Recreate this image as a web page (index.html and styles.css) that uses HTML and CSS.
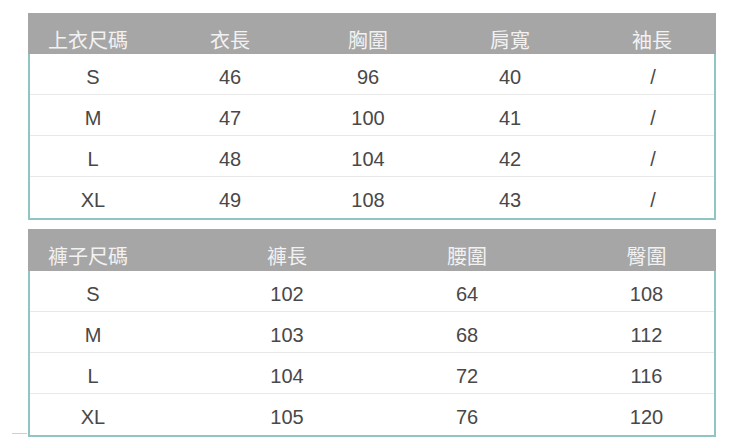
FILE: index.html
```html
<!DOCTYPE html>
<html lang="zh-Hant">
<head>
<meta charset="utf-8">
<title>尺碼表</title>
<link rel="stylesheet" href="styles.css">
</head>
<body>
<div class="page">
  <section class="size-table top">
    <div class="head row5">
      <div class="c first">上衣尺碼</div>
      <div class="c">衣長</div>
      <div class="c">胸圍</div>
      <div class="c">肩寬</div>
      <div class="c">袖長</div>
    </div>
    <div class="body">
      <div class="row row5"><div class="c">S</div><div class="c">46</div><div class="c">96</div><div class="c">40</div><div class="c slash">/</div></div>
      <div class="row row5"><div class="c">M</div><div class="c">47</div><div class="c">100</div><div class="c">41</div><div class="c slash">/</div></div>
      <div class="row row5"><div class="c">L</div><div class="c">48</div><div class="c">104</div><div class="c">42</div><div class="c slash">/</div></div>
      <div class="row row5"><div class="c">XL</div><div class="c">49</div><div class="c">108</div><div class="c">43</div><div class="c slash">/</div></div>
    </div>
  </section>
  <section class="size-table bottom">
    <div class="head row4">
      <div class="c first">褲子尺碼</div>
      <div class="c">褲長</div>
      <div class="c">腰圍</div>
      <div class="c">臀圍</div>
    </div>
    <div class="body">
      <div class="row row4"><div class="c">S</div><div class="c">102</div><div class="c">64</div><div class="c">108</div></div>
      <div class="row row4"><div class="c">M</div><div class="c">103</div><div class="c">68</div><div class="c">112</div></div>
      <div class="row row4"><div class="c">L</div><div class="c">104</div><div class="c">72</div><div class="c">116</div></div>
      <div class="row row4"><div class="c">XL</div><div class="c">105</div><div class="c">76</div><div class="c">120</div></div>
    </div>
  </section>
</div>
</body>
</html>
```
FILE: styles.css
```css
* { box-sizing: border-box; }
html, body { margin: 0; padding: 0; background: #ffffff; }
body {
  font-family: "Liberation Sans", "Noto Sans CJK TC", sans-serif;
  font-size: 20px;
  color: #484848;
}
.page {
  width: 750px;
  height: 448px;
  padding: 13px 34px 0 28px;
  display: flex;
  flex-direction: column;
  gap: 9px;
}
.size-table { width: 688px; display: flex; flex-direction: column; }
.bottom { position: relative; }
.bottom::before {
  content: "";
  position: absolute;
  left: -16px;
  bottom: 3px;
  width: 15px;
  height: 1px;
  background: #cfcfcf;
}
.head {
  background: #a6a6a6;
  color: #f2f2f2;
  height: 41px;
  padding-top: 17px;
  line-height: 23px;
}
.bottom .head { height: 42px; }
.head .c.first { text-align: left; padding-left: 20px; }
.body {
  border: 2px solid #90c5c3;
  border-top: none;
}
.row {
  height: 41px;
  padding-top: 12px;
  line-height: 23px;
  border-bottom: 1px solid #e8e8e8;
}
.row:last-child { border-bottom: none; }
.c { text-align: center; white-space: nowrap; }
.row5 { display: grid; grid-template-columns: 128px 148px 128px 156px 1fr; }
.body .row5 { grid-template-columns: 126px 148px 128px 156px 1fr; }
.body .row5 .slash { padding-left: 4px; }
.row4 { display: grid; grid-template-columns: 169px 180px 180px 1fr; }
.row4 .c:first-child { padding-right: 41px; }
.row4 .c:last-child { padding-left: 20px; }
.body .row4 { grid-template-columns: 167px 180px 180px 1fr; }
.body .row4 .c:last-child { padding-left: 22px; }
```
